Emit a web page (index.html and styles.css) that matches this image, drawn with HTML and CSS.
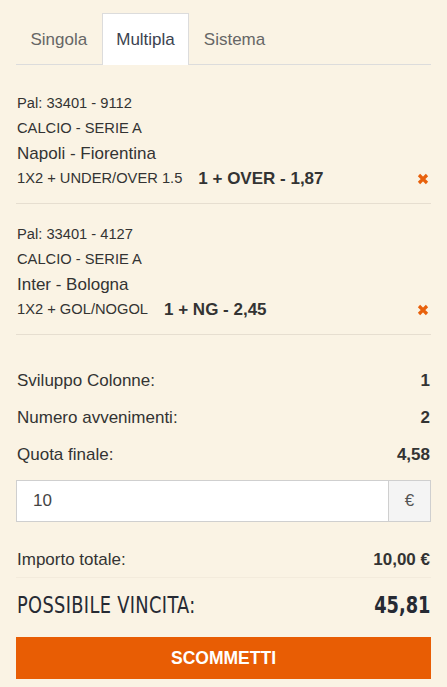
FILE: index.html
```html
<!DOCTYPE html>
<html lang="it">
<head>
<meta charset="utf-8">
<title>Schedina</title>
<link rel="stylesheet" href="styles.css">
</head>
<body>
<div class="slip">
  <nav class="tabs">
    <div class="tab">Singola</div>
    <div class="tab active">Multipla</div>
    <div class="tab">Sistema</div>
  </nav>

  <div class="events">
    <div class="event">
      <div class="line small">Pal: 33401 - 9112</div>
      <div class="line small">CALCIO - SERIE A</div>
      <div class="line match">Napoli - Fiorentina</div>
      <div class="line bet">
        <span class="market">1X2 + UNDER/OVER 1.5</span>
        <span class="pick">1 + OVER - 1,87</span>
        <svg class="remove" width="12" height="12" viewBox="0 0 12 12"><path d="M2 2 L10 10 M10 2 L2 10" stroke="#e8610c" stroke-width="3.2" stroke-linecap="butt"/></svg>
      </div>
    </div>
    <div class="event">
      <div class="line small">Pal: 33401 - 4127</div>
      <div class="line small">CALCIO - SERIE A</div>
      <div class="line match">Inter - Bologna</div>
      <div class="line bet">
        <span class="market">1X2 + GOL/NOGOL</span>
        <span class="pick">1 + NG - 2,45</span>
        <svg class="remove" width="12" height="12" viewBox="0 0 12 12"><path d="M2 2 L10 10 M10 2 L2 10" stroke="#e8610c" stroke-width="3.2" stroke-linecap="butt"/></svg>
      </div>
    </div>
  </div>

  <div class="summary">
    <div class="row"><span>Sviluppo Colonne:</span><b>1</b></div>
    <div class="row"><span>Numero avvenimenti:</span><b>2</b></div>
    <div class="row"><span>Quota finale:</span><b>4,58</b></div>
    <div class="stake">
      <div class="stake-input">10</div>
      <div class="stake-addon">€</div>
    </div>
    <div class="row total"><span>Importo totale:</span><b>10,00 €</b></div>
    <div class="win"><span class="win-label">POSSIBILE VINCITA:</span><b class="win-value">45,81</b></div>
    <button class="bet-btn">SCOMMETTI</button>
  </div>
</div>
</body>
</html>
```

FILE: styles.css
```css
* { box-sizing: border-box; }
html, body {
  margin: 0;
  padding: 0;
  background: #faf3e4;
}
body {
  font-family: "Liberation Sans", Arial, sans-serif;
  color: #333;
}
.slip {
  padding: 13px 16px 0;
}
.tabs {
  display: flex;
  height: 52px;
  border-bottom: 1px solid #dcdcdc;
}
.tab {
  padding: 0 13.5px;
  font-size: 17px;
  line-height: 51px;
  color: #666;
  border: 1px solid transparent;
  border-bottom: none;
  height: 52px;
}
.tab.active {
  background: #fff;
  border-color: #dcdcdc;
  color: #3b4350;
  margin-bottom: -1px;
}
.events {
  padding-top: 8px;
}
.event {
  padding: 18px 0 12px 1px;
  border-bottom: 1px solid #e6ded0;
}
.line {
  line-height: 25px;
  height: 25px;
}
.small {
  font-size: 14.7px;
}
.match {
  font-size: 17px;
}
.bet {
  display: flex;
  align-items: center;
}
.market {
  font-size: 14.7px;
}
.pick {
  font-size: 17px;
  font-weight: bold;
  margin-left: 16px;
}
.remove {
  margin-left: auto;
  margin-right: 2px;
}
.summary {
  padding-top: 27px;
}
.row {
  display: flex;
  justify-content: space-between;
  align-items: center;
  height: 37px;
  font-size: 17px;
  padding: 0 1px;
}
.row b {
  font-weight: bold;
}
.stake {
  display: flex;
  height: 42px;
  margin-top: 7px;
  border: 1px solid #cfcfcf;
  background: #fff;
}
.stake-input {
  flex: 1;
  padding-left: 16px;
  line-height: 40px;
  font-size: 17px;
  color: #444;
}
.stake-addon {
  width: 42px;
  border-left: 1px solid #cfcfcf;
  background: #f4f4f4;
  text-align: center;
  line-height: 40px;
  font-size: 17px;
  color: #555;
}
.row.total {
  margin-top: 20px;
  height: 36px;
  border-bottom: 1px solid #f3ebdc;
}
.win {
  display: flex;
  justify-content: space-between;
  align-items: center;
  height: 54px;
  padding: 0 1px;
  font-family: "DejaVu Sans Condensed", "DejaVu Sans", sans-serif;
  color: #262a33;
}
.win-label {
  display: inline-block;
  font-size: 23px;
  letter-spacing: 0.4px;
  transform: scaleX(0.86);
  transform-origin: left center;
}
.win-value {
  display: inline-block;
  font-size: 23px;
  font-weight: bold;
  transform: scaleX(0.86);
  transform-origin: right center;
}
.bet-btn {
  display: block;
  width: 100%;
  height: 42px;
  border: none;
  background: #e85d04;
  color: #fff;
  font-family: "Liberation Sans", Arial, sans-serif;
  font-size: 17.5px;
  font-weight: bold;
  margin-top: 5px;
}
```
